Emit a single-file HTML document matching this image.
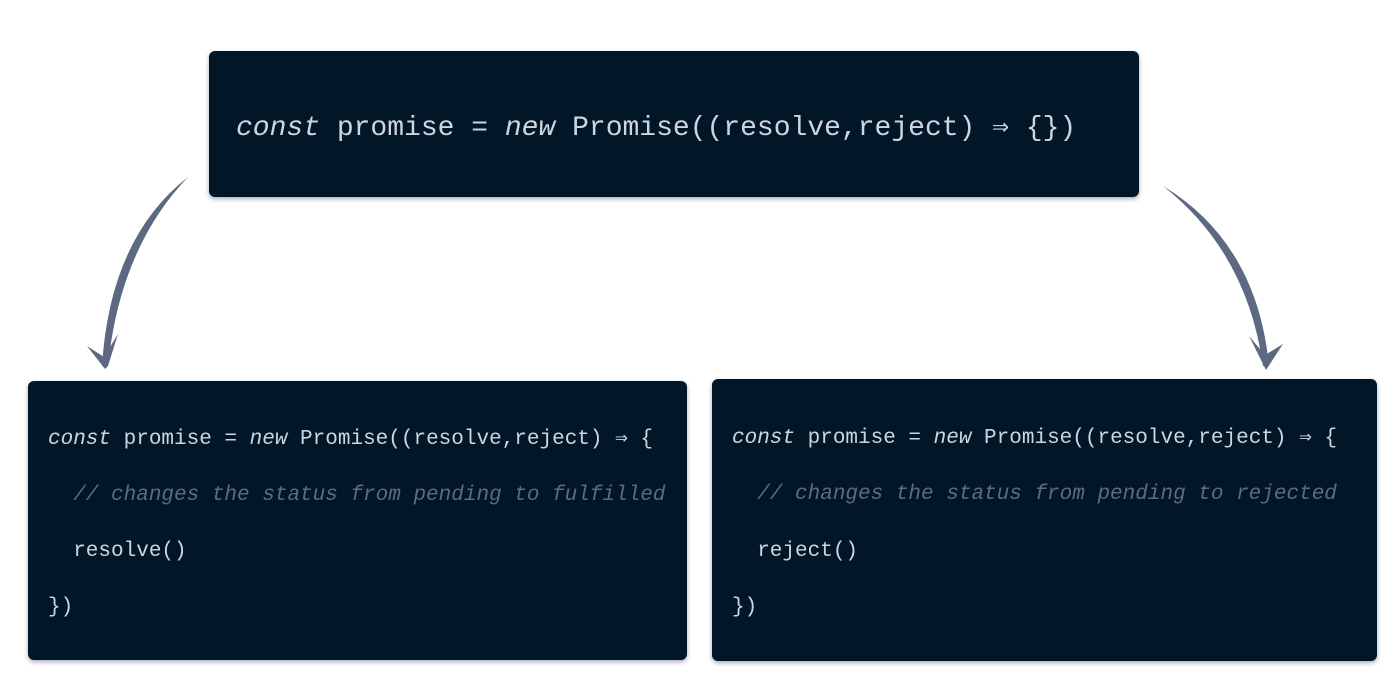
<!DOCTYPE html>
<html><head><meta charset="utf-8"><style>
html,body{margin:0;padding:0;background:#fff;width:1400px;height:700px;overflow:hidden;position:relative;font-family:"Liberation Mono","DejaVu Sans Mono",monospace;}
.box{position:absolute;background:#011627;border-radius:6px;box-shadow:0 2px 5px rgba(60,70,100,.45);color:#cdd5df;white-space:pre;}
i{font-style:italic}
.c{color:#5f6b7c;font-style:italic}
#top{left:209px;top:51px;width:930px;height:146px;font-size:28px;}
#top div{position:absolute;left:27px;top:60px;line-height:36px}
.b{font-size:21px;}
.b div{position:absolute;left:20px;line-height:28px}
#l{left:28px;top:381px;width:659px;height:279px}
#r{left:712px;top:379px;width:665px;height:282px}
</style></head><body>
<div class="box" id="top"><div><i>const</i> promise = <i>new</i> Promise((resolve,reject) ⇒ {})</div></div>
<div class="box b" id="l">
<div style="top:45px"><i>const</i> promise = <i>new</i> Promise((resolve,reject) ⇒ {</div>
<div style="top:101px" class="c">  // changes the status from pending to fulfilled</div>
<div style="top:157px">  resolve()</div>
<div style="top:213px">})</div>
</div>
<div class="box b" id="r">
<div style="top:46px"><i>const</i> promise = <i>new</i> Promise((resolve,reject) ⇒ {</div>
<div style="top:102px" class="c">  // changes the status from pending to rejected</div>
<div style="top:159px">  reject()</div>
<div style="top:215px">})</div>
</div>
<svg width="1400" height="700" style="position:absolute;left:0;top:0">
<g fill="#5c6980">
<path d="M188,177 Q110,238 102,366 L108,366 Q120,248 188,177 Z"/>
<path d="M105,369 L87,346 L104,357 L118,334 L108,366 Z"/>
<path d="M1163,186 Q1257,243 1269,366 L1263,366 Q1247,252 1163,186 Z"/>
<path d="M1266,370 L1249,336 L1265,355 L1283,344 Z"/>
</g>
</svg>
</body></html>
